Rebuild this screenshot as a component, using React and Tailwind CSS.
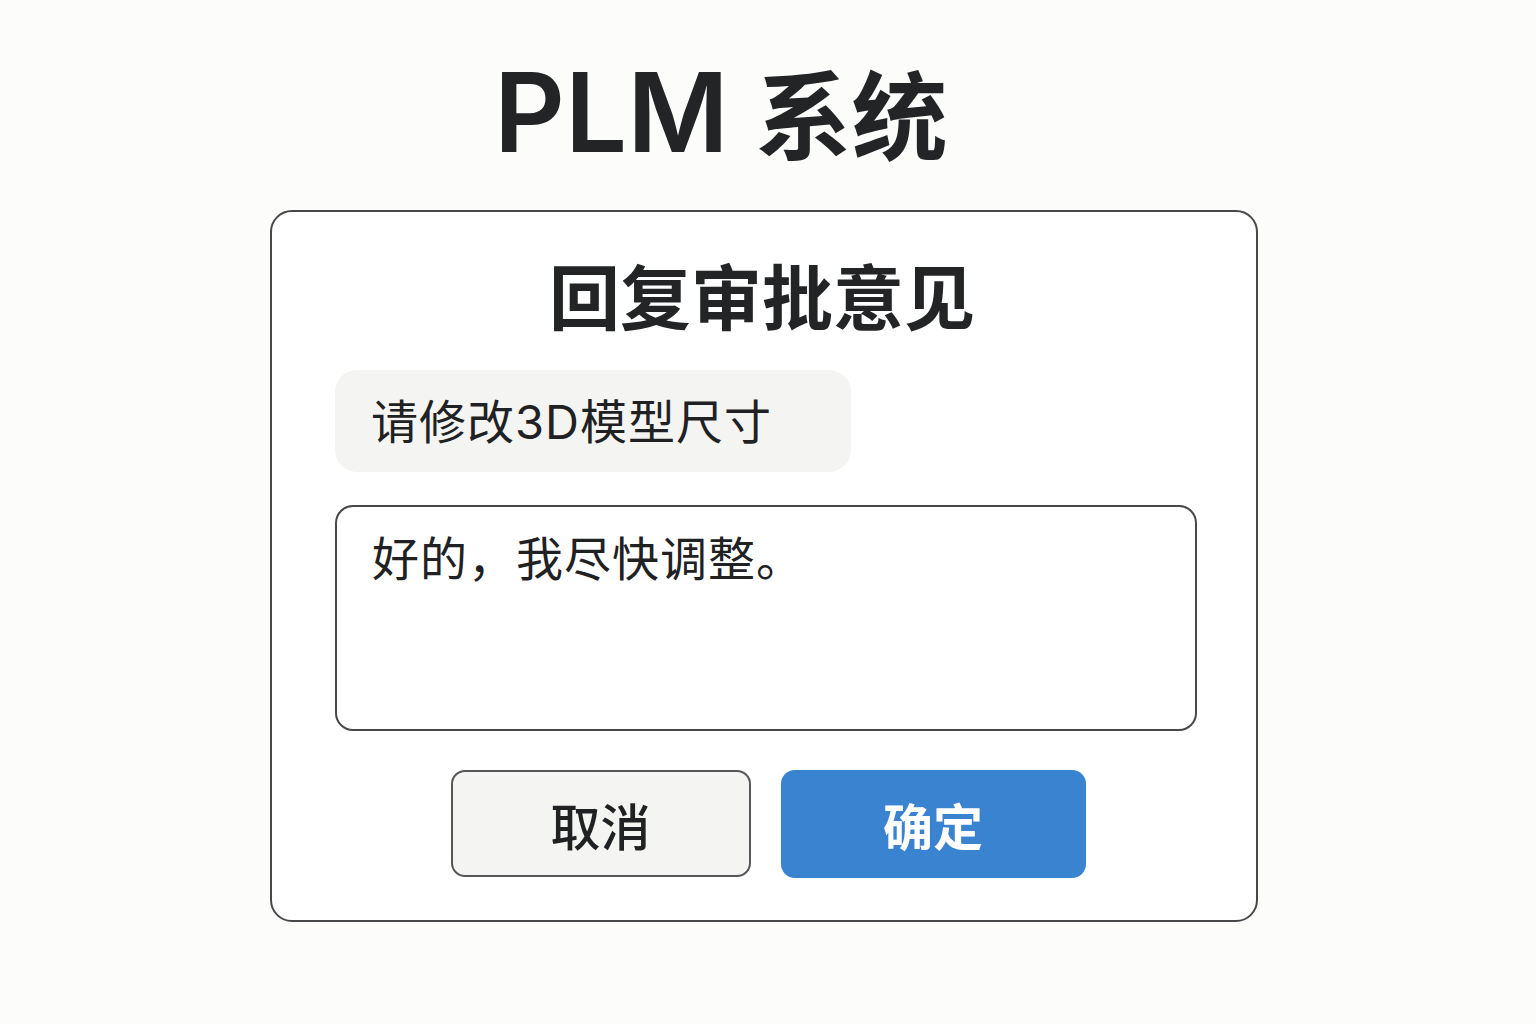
import React from "react";

const cjk = { fontFamily: 'Inter, "Noto Sans CJK SC", "Noto Sans", sans-serif' };
const cjkOnly = { fontFamily: '"Noto Sans CJK SC", "Noto Sans", sans-serif' };

export default function App() {
  return (
    <div className="min-h-[1024px] w-[1536px] bg-[#fcfcfb] flex flex-col" style={cjk}>
      <h1 className="mt-[57px] ml-[494px] h-[110px] text-[110px] leading-none font-semibold text-[#222426] whitespace-nowrap">
        <span>PLM</span>
        <span className="ml-[27px] text-[96px] font-semibold" style={cjkOnly}>系统</span>
      </h1>
      <div className="mt-[43px] ml-[270px] w-[988px] h-[712px] rounded-[22px] border-2 border-[#46484a] bg-white flex flex-col items-center">
        <h2 className="mt-[46px] ml-[-4px] text-[71px] leading-none font-bold text-[#222426]" style={cjkOnly}>
          回复审批意见
        </h2>
        <div className="self-start ml-[63px] mt-[41px] w-[516px] h-[102px] rounded-[22px] bg-[#f4f4f2] flex items-center pl-[36px]">
          <span className="text-[47px] leading-none text-[#1f2123] tracking-[1px]">请修改3D模型尺寸</span>
        </div>
        <div className="self-start ml-[63px] mt-[33px] w-[862px] h-[226px] rounded-[18px] border-2 border-[#46484a] pt-[28px] pl-[35px]">
          <span className="text-[47px] leading-none text-[#1f2123] tracking-[1px]">好的，我尽快调整。</span>
        </div>
        <div className="mt-[39px] flex gap-[30px] ml-[8px]" style={cjkOnly}>
          <button className="w-[300px] h-[107px] rounded-[14px] border-2 border-[#555759] bg-[#f4f4f2] text-[50px] font-medium text-[#1f2123] leading-none">
            取消
          </button>
          <button className="w-[305px] h-[108px] rounded-[14px] bg-[#3a83d1] text-[50px] font-bold text-white leading-none">
            确定
          </button>
        </div>
      </div>
    </div>
  );
}
